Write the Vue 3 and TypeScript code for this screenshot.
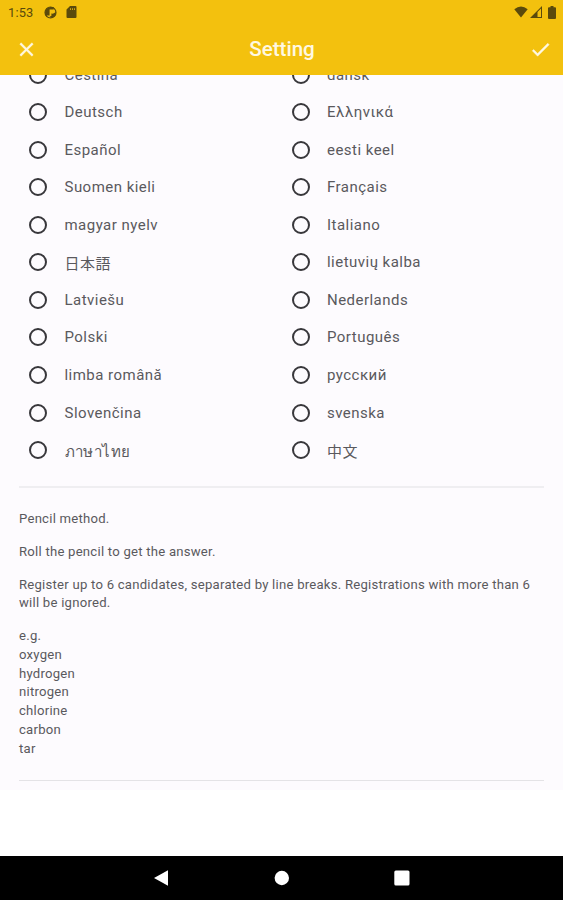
<script setup lang="ts">
interface Language {
  name: string
  tall?: boolean
}

const languages: Language[] = [
  { name: 'Čeština' }, { name: 'dansk' },
  { name: 'Deutsch' }, { name: 'Ελληνικά' },
  { name: 'Español' }, { name: 'eesti keel' },
  { name: 'Suomen kieli' }, { name: 'Français' },
  { name: 'magyar nyelv' }, { name: 'Italiano' },
  { name: '日本語', tall: true }, { name: 'lietuvių kalba' },
  { name: 'Latviešu' }, { name: 'Nederlands' },
  { name: 'Polski' }, { name: 'Português' },
  { name: 'limba română' }, { name: 'русский' },
  { name: 'Slovenčina' }, { name: 'svenska' },
  { name: 'ภาษาไทย', tall: true }, { name: '中文', tall: true },
]

const examples: string[] = ['e.g.', 'oxygen', 'hydrogen', 'nitrogen', 'chlorine', 'carbon', 'tar']
</script>

<template>
  <div class="screen">
    <header class="header">
      <div class="status">
        <span class="clock">1:53</span>
        <svg class="app-icon" viewBox="0 0 14 14">
          <circle cx="7" cy="7" r="5.9" fill="none" stroke="currentColor" stroke-width="1.3" />
          <path fill="currentColor" d="M1.100 7A5.900 5.900 0 0 1 7 1.100h3.500v2.700H6v6.500H3V12Q1 10 1.100 7zM8 8.200c2 .4 3.600-.5 4.900-2.200.2 4-2.300 6.900-5.400 6.900L6 11.500l2-1z" />
        </svg>
        <svg class="card-icon" viewBox="0 0 11 12">
          <path fill="currentColor" fill-rule="evenodd" d="M4 0h5.500Q10.500 0 10.500 1v10q0 1-1 1h-8q-1 0-1-1V3.500zM4 2.200v1.900h.8V2.200zm2 0v1.900h.8V2.200zm2 0v1.900h.8V2.200z" />
        </svg>
        <span class="spacer"></span>
        <svg class="wifi" viewBox="0 0 14 12">
          <path fill="currentColor" d="M7 11.500.300 3.200Q7-2.200 13.700 3.200z" />
        </svg>
        <svg class="signal" viewBox="0 0 12 12">
          <path fill="currentColor" fill-rule="evenodd" d="M0 12 12 0v12zM7.500 6V11H11V2.500z" />
        </svg>
        <svg class="battery" viewBox="0 0 8 13">
          <path fill="currentColor" d="M2.500 0h3v1.300H7q1 0 1 1V12q0 1-1 1H1q-1 0-1-1V2.300q0-1 1-1h1.500z" />
        </svg>
      </div>
      <div class="toolbar">
        <svg class="tool" viewBox="0 0 24 24">
          <path fill="currentColor" stroke="currentColor" stroke-width="0.500" d="M19 6.410 17.590 5 12 10.590 6.410 5 5 6.410 10.590 12 5 17.590 6.410 19 12 13.410 17.590 19 19 17.590 13.410 12z" />
        </svg>
        <h1 class="title">Setting</h1>
        <svg class="tool" viewBox="0 0 24 24">
          <path fill="currentColor" stroke="currentColor" stroke-width="0.500" d="M9 16.170 4.830 12l-1.420 1.410L9 19 21 7l-1.410-1.410z" />
        </svg>
      </div>
    </header>

    <main class="body">
      <section class="content">
        <div class="languages">
          <label v-for="language in languages" :key="language.name" class="option">
            <span class="radio"></span>
            <span class="name" :class="{ tall: language.tall }">{{ language.name }}</span>
          </label>
        </div>
        <div class="help">
          <p>Pencil method.</p>
          <p>Roll the pencil to get the answer.</p>
          <p>Register up to 6 candidates, separated by line breaks. Registrations with more than 6 will be ignored.</p>
          <p><span v-for="line in examples" :key="line" class="line">{{ line }}</span></p>
        </div>
      </section>
    </main>

    <nav class="nav">
      <svg viewBox="0 0 18 18"><path fill="#fff" d="M15 1.200v15.600L1 9z" /></svg>
      <svg viewBox="0 0 18 18"><circle cx="8.800" cy="9" r="7.200" fill="#fff" /></svg>
      <svg viewBox="0 0 18 18"><rect x="1.300" y="1.400" width="15.200" height="15.200" rx="1.500" fill="#fff" /></svg>
    </nav>
  </div>
</template>

<style>
body {
  margin: 0;
  background: #fff;
}
</style>

<style scoped>
.screen {
  width: 563px;
  height: 900px;
  display: flex;
  flex-direction: column;
  overflow: hidden;
  background: #fff;
  font-family: Roboto, "Noto Sans CJK JP", "Noto Sans", sans-serif;
}
.header {
  flex: none;
  height: 75px;
  background: #f3c10e;
}
.status {
  height: 24px;
  display: flex;
  align-items: center;
  padding: 0 7px 0 8px;
  color: #5a4a0c;
}
.clock {
  width: 36px;
  font-size: 12.800px;
  letter-spacing: 0.200px;
  line-height: 25px;
}
.app-icon {
  width: 13px;
  height: 13px;
}
.card-icon {
  width: 11px;
  height: 12px;
  margin-left: 9px;
}
.spacer {
  flex: 1;
}
.wifi {
  width: 14px;
  height: 12px;
}
.signal {
  width: 12px;
  height: 12px;
  margin-left: 2px;
}
.battery {
  width: 8px;
  height: 13px;
  margin-left: 6px;
}
.toolbar {
  height: 51px;
  display: flex;
  align-items: center;
  justify-content: space-between;
  padding: 0 11px 0 15px;
  color: #fff8e2;
}
.tool {
  width: 23px;
  height: 23px;
}
.title {
  margin: 0 3px 2px 0;
  font-size: 20.600px;
  font-weight: 500;
  line-height: 28px;
}
.body {
  flex: 1;
  min-height: 0;
  overflow: hidden;
}
.content {
  height: 734px;
  margin-top: -19px;
  background: #fdfbfe;
}
.languages {
  display: grid;
  grid-template-columns: 262.500px 262.500px;
  grid-auto-rows: 37.540px;
  margin: 0 19px;
  padding-bottom: 17px;
  border-bottom: 2px solid #efeef1;
}
.option {
  display: flex;
  align-items: center;
  padding-left: 10px;
}
.radio {
  flex: none;
  box-sizing: border-box;
  width: 18px;
  height: 18px;
  border: 2px solid #38373b;
  border-radius: 50%;
}
.name {
  margin-left: 17.500px;
  color: #5a595d;
  font-size: 15px;
  letter-spacing: 0.470px;
  line-height: 22px;
  white-space: nowrap;
}
.tall {
  padding-top: 3px;
}
.help {
  display: flex;
  flex-direction: column;
  gap: 14.100px;
  margin: 0 19px;
  padding: 22px 0 21px;
  border-bottom: 1px solid #e4e3e6;
  color: #5a595d;
  font-size: 13.130px;
  letter-spacing: 0.235px;
  line-height: 18.770px;
}
.help p {
  margin: 0;
}
.line {
  display: block;
}
.nav {
  flex: none;
  height: 44px;
  display: flex;
  align-items: center;
  justify-content: center;
  gap: 102px;
  background: #000;
}
.nav svg {
  width: 18px;
  height: 18px;
}
</style>
